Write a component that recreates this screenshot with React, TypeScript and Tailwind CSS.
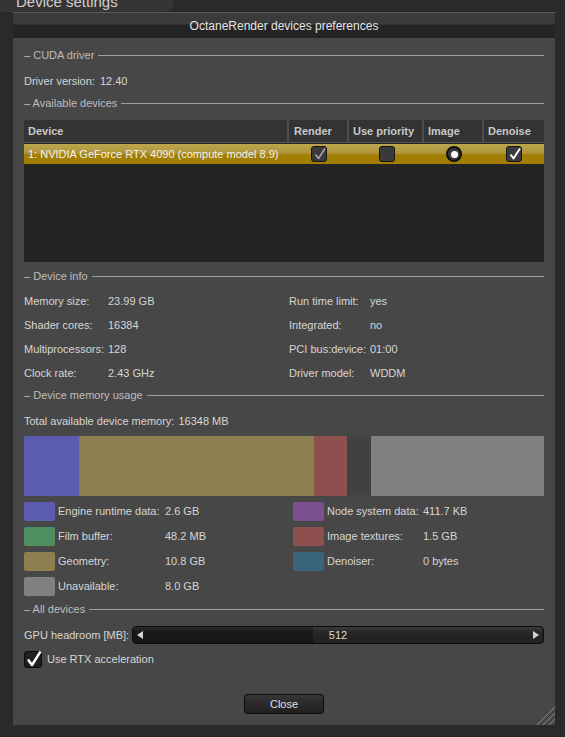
import React from "react";

const deviceInfo = [
  ["Memory size:", "23.99 GB", "Run time limit:", "yes"],
  ["Shader cores:", "16384", "Integrated:", "no"],
  ["Multiprocessors:", "128", "PCI bus:device:", "01:00"],
  ["Clock rate:", "2.43 GHz", "Driver model:", "WDDM"],
];

const legend = [
  { color: "bg-[#5c5cb0]", label: "Engine runtime data:", value: "2.6 GB", right: { color: "bg-[#7c4f8e]", label: "Node system data:", value: "411.7 KB" } },
  { color: "bg-[#4f8f5f]", label: "Film buffer:", value: "48.2 MB", right: { color: "bg-[#8e4f4f]", label: "Image textures:", value: "1.5 GB" } },
  { color: "bg-[#8c8050]", label: "Geometry:", value: "10.8 GB", right: { color: "bg-[#3a6479]", label: "Denoiser:", value: "0 bytes" } },
  { color: "bg-[#808080]", label: "Unavailable:", value: "8.0 GB", right: null },
];

function Section({ title }: { title: string }) {
  return (
    <div className="flex h-[20px] items-center gap-[4px] text-[#bdbdbd]">
      <span>– {title}</span>
      <div className="h-px flex-1 bg-[#9e9e9e]" />
    </div>
  );
}

function Check({ light }: { light?: boolean }) {
  return (
    <div className="relative h-[16px] w-[16px] rounded-[3px] border border-[#151515] bg-[#3a3a3a]">
      <svg viewBox="0 0 16 16" className="absolute left-[0px] top-[-1px] h-[16px] w-[16px]">
        <polyline
          points="3.5,8.5 6.5,12.5 13,2.5"
          fill="none"
          stroke={light ? "#ffffff" : "#a9a9a9"}
          strokeWidth={light ? 2 : 1.5}
          strokeLinejoin="round"
        />
      </svg>
    </div>
  );
}

export default function App() {
  return (
    <div className="relative h-[737px] w-[565px] overflow-hidden bg-[#2a2a2a] font-['Liberation_Sans',Arial,sans-serif] text-[11px] text-[#d6d6d6]">
      {/* window tab behind the dialog */}
      <div className="h-[12px]">
        <div className="h-full w-[174px] overflow-hidden rounded-br-[10px] bg-[#353535] pl-[16px]">
          <div className="-mt-[6px] text-[15px] leading-[16px] text-[#cfcfcf]">Device settings</div>
        </div>
      </div>

      {/* dialog */}
      <div className="relative ml-[13px] flex h-[713px] w-[542px] flex-col border-t border-[#5a5a5a] bg-[#474747]">
        <div className="flex h-[25px] items-center justify-center bg-[linear-gradient(to_bottom,#3b3b3b_0%,#3b3b3b_45%,#242424_47%,#242424_100%)] text-[12px] text-[#e4e4e4]">
          OctaneRender devices preferences
        </div>

        <div className="flex flex-col px-[11px] pt-[7px]">
          <Section title="CUDA driver" />
          <div className="mt-[6px] flex h-[20px] items-center gap-[5px]">
            <span>Driver version:</span>
            <span>12.40</span>
          </div>

          <div className="mt-[2px]">
            <Section title="Available devices" />
          </div>

          {/* devices table */}
          <div className="mt-[7px] flex h-[142px] flex-col bg-[#242424]">
            <div className="flex h-[23px] border-b border-[#565656] bg-[#333333] font-bold text-[#c9c9c9]">
              <div className="flex w-[265px] items-center border-r-2 border-[#4e4e4e] pl-[4px]">Device</div>
              <div className="flex w-[60px] items-center border-r-2 border-[#4e4e4e] pl-[5px]">Render</div>
              <div className="flex w-[75px] items-center border-r-2 border-[#4e4e4e] pl-[4px]">Use priority</div>
              <div className="flex w-[60px] items-center border-r-2 border-[#4e4e4e] pl-[4px]">Image</div>
              <div className="flex flex-1 items-center pl-[4px]">Denoise</div>
            </div>
            <div className="mt-[1px] flex h-[20px] bg-[linear-gradient(to_bottom,#bca64e_0%,#b0953a_45%,#a27e00_55%,#a07c00_100%)] text-[#f2f2f2]">
              <div className="flex w-[265px] items-center pl-[4px]">1: NVIDIA GeForce RTX 4090 (compute model 8.9)</div>
              <div className="flex w-[60px] items-center justify-center">
                <Check />
              </div>
              <div className="flex w-[75px] items-center justify-center">
                <div className="h-[16px] w-[16px] rounded-[3px] border border-[#151515] bg-[#3a3a3a]" />
              </div>
              <div className="flex w-[60px] items-center justify-center">
                <div className="flex h-[16px] w-[16px] items-center justify-center rounded-full border-2 border-[#101010] bg-[#3a3a3a]">
                  <div className="h-[7px] w-[7px] rounded-full bg-white" />
                </div>
              </div>
              <div className="flex flex-1 items-center justify-center">
                <Check light />
              </div>
            </div>
          </div>

          <div className="mt-[4px]">
            <Section title="Device info" />
          </div>
          <div className="mt-[3px] flex flex-col">
            {deviceInfo.map((row) => (
              <div key={row[0]} className="grid h-[24px] grid-cols-[265px_1fr] items-center">
                <div className="flex">
                  <span className="w-[84px]">{row[0]}</span>
                  <span>{row[1]}</span>
                </div>
                <div className="flex">
                  <span className="w-[81px]">{row[2]}</span>
                  <span>{row[3]}</span>
                </div>
              </div>
            ))}
          </div>

          <Section title="Device memory usage" />
          <div className="mt-[6px] flex h-[20px] items-center gap-[4px]">
            <span>Total available device memory:</span>
            <span>16348 MB</span>
          </div>

          {/* memory bar */}
          <div className="mt-[5px] flex h-[60px]">
            <div className="w-[55px] bg-[#5c5db0]" />
            <div className="w-[1px] bg-[#4f8f5f]" />
            <div className="w-[234px] bg-[#8c8050]" />
            <div className="w-[33px] bg-[#8e4f4f]" />
            <div className="my-[1px] w-[24px] bg-[#414141]" />
            <div className="flex-1 bg-[#808080]" />
          </div>

          <div className="mt-[6px] flex flex-col gap-[6px]">
            {legend.map((item) => (
              <div key={item.label} className="grid h-[19px] grid-cols-[269px_1fr]">
                <div className="flex items-center">
                  <div className={`h-[19px] w-[31px] rounded-[2px] ${item.color}`} />
                  <span className="ml-[3px] w-[107px]">{item.label}</span>
                  <span>{item.value}</span>
                </div>
                {item.right && (
                  <div className="flex items-center">
                    <div className={`h-[19px] w-[31px] rounded-[2px] ${item.right.color}`} />
                    <span className="ml-[3px] w-[96px]">{item.right.label}</span>
                    <span>{item.right.value}</span>
                  </div>
                )}
              </div>
            ))}
          </div>

          <div className="mt-[3px]">
            <Section title="All devices" />
          </div>

          {/* headroom slider */}
          <div className="mt-[7px] flex h-[18px] items-center">
            <span className="w-[108px]">GPU headroom [MB]:</span>
            <div className="relative flex h-[18px] flex-1 overflow-hidden rounded-[4px] border border-[#0b0b0b] bg-[linear-gradient(to_bottom,#3a3a3a_0%,#262626_35%,#222222_100%)]">
              <div className="h-full w-[44%] bg-[linear-gradient(to_bottom,#2a2a2a_0%,#181818_35%,#151515_100%)]" />
              <div className="absolute inset-0 flex items-center justify-between px-[4px]">
                <svg viewBox="0 0 6 8" className="h-[8px] w-[6px]">
                  <polygon points="6,0 0,4 6,8" fill="#d4d4d4" />
                </svg>
                <span className="text-[#dadada]">512</span>
                <svg viewBox="0 0 6 8" className="h-[8px] w-[6px]">
                  <polygon points="0,0 6,4 0,8" fill="#d4d4d4" />
                </svg>
              </div>
            </div>
          </div>

          {/* rtx checkbox */}
          <div className="mt-[7px] flex h-[17px] items-center gap-[5px]">
            <div className="relative h-[17px] w-[18px] rounded-[3px] border border-[#0b0b0b] bg-[#1f1f1f]">
              <svg viewBox="0 0 18 18" className="absolute left-[0px] top-[-2px] h-[18px] w-[18px]">
                <polyline
                  points="3,9.5 7,15 15.5,1.5"
                  fill="none"
                  stroke="#ffffff"
                  strokeWidth={2.4}
                  strokeLinejoin="round"
                />
              </svg>
            </div>
            <span>Use RTX acceleration</span>
          </div>

          <button className="mx-auto mt-[26px] flex h-[20px] w-[80px] items-center justify-center rounded-[3px] border border-[#0c0c0c] bg-[linear-gradient(to_bottom,#363636_0%,#2a2a2a_45%,#202020_100%)] text-[#e0e0e0]">
            Close
          </button>
        </div>

        {/* resize grip */}
        <svg viewBox="0 0 18 18" className="absolute bottom-0 right-0 h-[18px] w-[18px]">
          <line x1="0" y1="18" x2="18" y2="0" stroke="#8a8a8a" strokeWidth="1" />
          <line x1="6" y1="18" x2="18" y2="6" stroke="#8a8a8a" strokeWidth="1" />
          <line x1="12" y1="18" x2="18" y2="12" stroke="#8a8a8a" strokeWidth="1" />
        </svg>
      </div>
    </div>
  );
}
